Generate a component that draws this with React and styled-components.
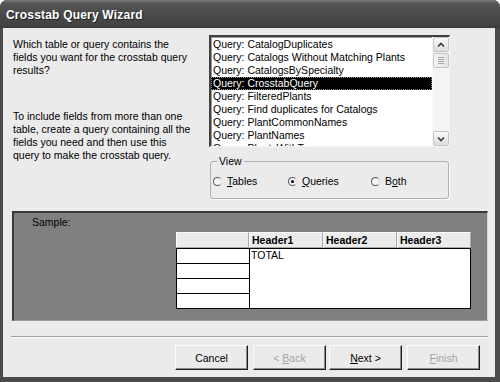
import React from "react";
import styled, { createGlobalStyle } from "styled-components";

const Global = createGlobalStyle`
  html, body { margin: 0; padding: 0; background: #fff; }
  body { font-family: "Liberation Sans", Arial, sans-serif; }
`;

const Window = styled.div`
  width: 500px;
  height: 382px;
  display: flex;
  flex-direction: column;
  background: #4a4a4a;
  border-radius: 7px 7px 0 0;
  overflow: hidden;
  font-family: "Liberation Sans", Arial, sans-serif;
  font-size: 10.5px;
  color: #000;
`;

const TitleBar = styled.div`
  height: 28px;
  flex: none;
  display: flex;
  align-items: center;
  padding: 1px 0 0 6px;
  box-sizing: border-box;
  background: linear-gradient(#7a7a7a 0%, #555 12%, #4a4a4a 50%, #444 85%, #3c3c3c 100%);
  color: #fff;
  font-weight: bold;
  font-size: 12px;
  text-shadow: 1px 1px 0 #222;
  letter-spacing: 0.2px;
`;

const Frame = styled.div`
  flex: 1;
  display: flex;
  flex-direction: column;
  margin: 0 5px 5px 3px;
  background: #ebebeb;
`;

const Top = styled.div`
  display: flex;
  padding: 7px 0 0 10px;
`;

const Intro = styled.div`
  width: 196px;
  flex: none;
  padding-top: 3px;
`;

const Para = styled.p`
  margin: 0 0 ${(p) => p.$after || 0}px 0;
  line-height: 13px;
`;

const Side = styled.div`
  width: 241px;
  display: flex;
  flex-direction: column;
`;

const ListBox = styled.div`
  height: 112px;
  box-sizing: border-box;
  display: flex;
  background: #fff;
  border-style: solid;
  border-width: 2px 1px 1px 2px;
  border-color: #404040 #f4f4f4 #f4f4f4 #404040;
  box-shadow: inset 1px 1px 0 #9a9a9a;
`;

const Items = styled.div`
  flex: 1;
  overflow: hidden;
  padding-top: 1px;
`;

const Item = styled.div`
  height: 13px;
  line-height: 13px;
  padding-left: 2px;
  white-space: nowrap;
  background: ${(p) => (p.$selected ? "#000" : "transparent")};
  color: ${(p) => (p.$selected ? "#fff" : "#000")};
  outline: ${(p) => (p.$selected ? "1px dotted #888" : "none")};
  outline-offset: -1px;
`;

const ScrollBar = styled.div`
  width: 16px;
  flex: none;
  display: flex;
  flex-direction: column;
  background: #f5f5f5;
  border-left: 1px solid #fafafa;
`;

const ScrollButton = styled.div`
  height: 15px;
  box-sizing: border-box;
  margin: ${(p) => (p.$down ? "auto 0 0 0" : "0")};
  display: flex;
  align-items: center;
  justify-content: center;
  border: 1px solid #c4c4c4;
  border-radius: 2px;
  background: linear-gradient(#fafafa, #dcdcdc);
`;

const Thumb = styled.div`
  height: 15px;
  box-sizing: border-box;
  margin-top: 1px;
  display: flex;
  flex-direction: column;
  align-items: center;
  justify-content: center;
  gap: 1px;
  border: 1px solid #c4c4c4;
  border-radius: 2px;
  background: linear-gradient(90deg, #f4f4f4, #e4e4e4);
`;

const Grip = styled.span`
  width: 6px;
  height: 1px;
  background: #a8a8a8;
`;

const GroupBox = styled.fieldset`
  margin: 8px 0 0 1px;
  width: 239px;
  box-sizing: border-box;
  height: 44px;
  padding: 0 0 0 2px;
  border: 1px solid #b0b0b0;
  border-radius: 3px;
  box-shadow: 1px 1px 0 #fafafa;
`;

const Legend = styled.legend`
  padding: 0 2px;
  margin-left: 4px;
  line-height: 13px;
`;

const Radios = styled.div`
  display: grid;
  grid-template-columns: 75px 83px auto;
  align-items: center;
  padding-top: 7px;
`;

const RadioItem = styled.label`
  display: flex;
  align-items: center;
  gap: 5px;
  line-height: 13px;
`;

const Circle = styled.span`
  width: 9px;
  height: 9px;
  box-sizing: border-box;
  border-radius: 50%;
  border: 1px solid #5a5a5a;
  border-right-color: #e0e0e0;
  background: #f4f4f4;
  display: flex;
  align-items: center;
  justify-content: center;
  &::after {
    content: "";
    width: 3px;
    height: 3px;
    border-radius: 50%;
    background: ${(p) => (p.$checked ? "#000" : "transparent")};
  }
`;

const U = styled.span`
  text-decoration: underline;
`;

const Sample = styled.div`
  margin: 12px 7px 0 9px;
  height: 110px;
  box-sizing: border-box;
  background: #808080;
  border-style: solid;
  border-width: 2px 1px 1px 2px;
  border-color: #3a3a3a #d8d8d8 #9a9a9a #3a3a3a;
  padding: 3px 0 0 18px;
`;

const SampleLabel = styled.div`
  line-height: 13px;
`;

const SampleGrid = styled.div`
  display: flex;
  margin: 3px 0 0 144px;
`;

const RowHeads = styled.div`
  width: 73px;
  display: flex;
  flex-direction: column;
`;

const HeadCell = styled.div`
  height: 16px;
  box-sizing: border-box;
  width: ${(p) => p.$w}px;
  background: #ebebeb;
  border-style: solid;
  border-width: 1px;
  border-color: #fbfbfb #a8a8a8 #a8a8a8 #fbfbfb;
  font-weight: bold;
  line-height: 14px;
  padding-left: 2px;
  white-space: nowrap;
`;

const RowCell = styled.div`
  height: 14px;
  background: #fff;
  border-top: 1px solid #000;
  border-left: 1px solid #000;
  &:last-child {
    border-bottom: 1px solid #000;
  }
`;

const DataTable = styled.div`
  display: flex;
  flex-direction: column;
`;

const HeadRow = styled.div`
  display: flex;
`;

const DataBody = styled.div`
  width: 222px;
  height: 61px;
  box-sizing: border-box;
  background: #fff;
  border: 1px solid #000;
  padding-left: 1px;
  line-height: 13px;
`;

const Separator = styled.div`
  margin: 15px 7px 0 8px;
  height: 0;
  border-top: 1px solid #a0a0a0;
  border-bottom: 1px solid #fcfcfc;
`;

const ButtonRow = styled.div`
  display: flex;
  justify-content: flex-end;
  padding: 7px 15px 0 0;
`;

const Button = styled.div`
  width: 73px;
  height: 25px;
  box-sizing: border-box;
  margin-left: ${(p) => p.$gap || 0}px;
  display: flex;
  align-items: center;
  justify-content: center;
  background: #ebebeb;
  border-style: solid;
  border-width: 1px;
  border-color: #fcfcfc #1e1e1e #1e1e1e #fcfcfc;
  box-shadow: inset -1px -1px 0 #8a8a8a;
  color: ${(p) => (p.$disabled ? "#a4a4a4" : "#000")};
`;

const Chevron = ({ down }) => (
  <svg width="8" height="6" viewBox="0 0 8 6">
    <path
      d={down ? "M1 1.5 L4 4.5 L7 1.5" : "M1 4.5 L4 1.5 L7 4.5"}
      fill="none"
      stroke="#3a3a3a"
      strokeWidth="1.6"
    />
  </svg>
);

const items = [
  "Query: CatalogDuplicates",
  "Query: Catalogs Without Matching Plants",
  "Query: CatalogsBySpecialty",
  "Query: CrosstabQuery",
  "Query: FilteredPlants",
  "Query: Find duplicates for Catalogs",
  "Query: PlantCommonNames",
  "Query: PlantNames",
  "Query: PlantsWithTypes",
];

export default function App() {
  return (
    <>
      <Global />
      <Window>
        <TitleBar>Crosstab Query Wizard</TitleBar>
        <Frame>
          <Top>
            <Intro>
              <Para $after={33}>
                Which table or query contains the
                <br />
                fields you want for the crosstab query
                <br />
                results?
              </Para>
              <Para>
                To include fields from more than one
                <br />
                table, create a query containing all the
                <br />
                fields you need and then use this
                <br />
                query to make the crosstab query.
              </Para>
            </Intro>
            <Side>
              <ListBox>
                <Items>
                  {items.map((t, i) => (
                    <Item key={t} $selected={i === 3}>
                      {t}
                    </Item>
                  ))}
                </Items>
                <ScrollBar>
                  <ScrollButton>
                    <Chevron />
                  </ScrollButton>
                  <Thumb>
                    <Grip />
                    <Grip />
                    <Grip />
                    <Grip />
                  </Thumb>
                  <ScrollButton $down>
                    <Chevron down />
                  </ScrollButton>
                </ScrollBar>
              </ListBox>
              <GroupBox>
                <Legend>View</Legend>
                <Radios>
                  <RadioItem>
                    <Circle />
                    <span>
                      <U>T</U>ables
                    </span>
                  </RadioItem>
                  <RadioItem>
                    <Circle $checked />
                    <span>
                      <U>Q</U>ueries
                    </span>
                  </RadioItem>
                  <RadioItem>
                    <Circle />
                    <span>
                      B<U>o</U>th
                    </span>
                  </RadioItem>
                </Radios>
              </GroupBox>
            </Side>
          </Top>
          <Sample>
            <SampleLabel>Sample:</SampleLabel>
            <SampleGrid>
              <RowHeads>
                <HeadCell $w={73} />
                <RowCell />
                <RowCell />
                <RowCell />
                <RowCell />
              </RowHeads>
              <DataTable>
                <HeadRow>
                  <HeadCell $w={74}>Header1</HeadCell>
                  <HeadCell $w={74}>Header2</HeadCell>
                  <HeadCell $w={74}>Header3</HeadCell>
                </HeadRow>
                <DataBody>TOTAL</DataBody>
              </DataTable>
            </SampleGrid>
          </Sample>
          <Separator />
          <ButtonRow>
            <Button>
              <span>Cancel</span>
            </Button>
            <Button $gap={5} $disabled>
              <span>
                &lt; <U>B</U>ack
              </span>
            </Button>
            <Button $gap={3}>
              <span>
                <U>N</U>ext &gt;
              </span>
            </Button>
            <Button $gap={5} $disabled>
              <span>
                <U>F</U>inish
              </span>
            </Button>
          </ButtonRow>
        </Frame>
      </Window>
    </>
  );
}
